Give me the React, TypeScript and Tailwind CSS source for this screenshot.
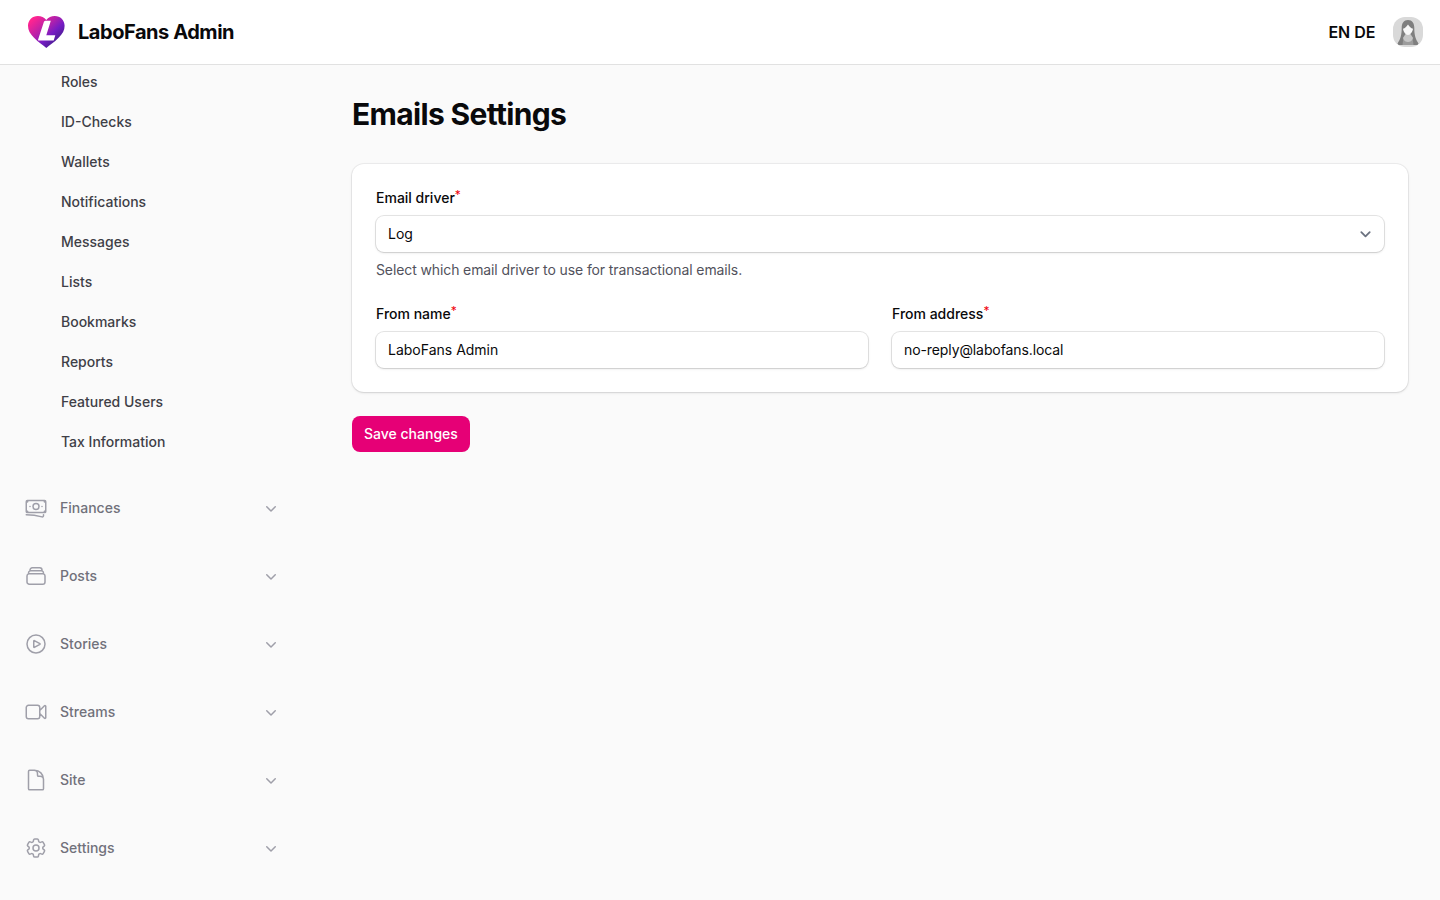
import { useState } from 'react';
import {
  HiOutlineBanknotes,
  HiOutlineCog6Tooth,
  HiOutlineDocument,
  HiOutlinePlayCircle,
  HiOutlineRectangleStack,
  HiOutlineVideoCamera,
  HiMiniChevronDown,
} from 'react-icons/hi2';
import type { IconType } from 'react-icons';

type NavGroup = {
  label: string;
  icon: IconType;
};

const userItems = [
  'Roles',
  'ID-Checks',
  'Wallets',
  'Notifications',
  'Messages',
  'Lists',
  'Bookmarks',
  'Reports',
  'Featured Users',
  'Tax Information',
];

const navGroups: NavGroup[] = [
  { label: 'Finances', icon: HiOutlineBanknotes },
  { label: 'Posts', icon: HiOutlineRectangleStack },
  { label: 'Stories', icon: HiOutlinePlayCircle },
  { label: 'Streams', icon: HiOutlineVideoCamera },
  { label: 'Site', icon: HiOutlineDocument },
  { label: 'Settings', icon: HiOutlineCog6Tooth },
];

function Logo() {
  return (
    <svg viewBox="0 0 37 32" className="h-8 w-[37px]" aria-hidden="true">
      <defs>
        <linearGradient id="heart" x1="5" y1="3" x2="27" y2="27" gradientUnits="userSpaceOnUse">
          <stop offset="0" stopColor="#ff2490" />
          <stop offset="0.45" stopColor="#b321ab" />
          <stop offset="0.72" stopColor="#761cc4" />
          <stop offset="1" stopColor="#4c1d95" />
        </linearGradient>
      </defs>
      <path
        d="M18.300 32C15 29 10.500 26.500 6 21.800C2 17.800 0 14.500 0 9.800C0 4.200 4.300 0 9.800 0C13.300 0 16.300 1.300 18.300 4C20.300 1.300 23.300 0 26.800 0C32.300 0 36.600 4.200 36.600 9.800C36.600 14.500 34.600 17.800 30.600 21.800C26.100 26.500 21.600 29 18.300 32Z"
        fill="url(#heart)"
      />
      <path
        d="M17.500 4.800H22.800L18.300 19.300H27.300L25.700 24.600H11C10.100 24.600 9.900 24 10.200 23.200L15.700 6.600C16 5.500 16.500 4.800 17.500 4.800Z"
        fill="#fff"
      />
    </svg>
  );
}

function Avatar() {
  return (
    <svg viewBox="0 0 30 30" className="size-[30px] rounded-[12px]" aria-hidden="true">
      <rect width="30" height="30" fill="#d9d9d9" />
      <path
        d="M15 3C10.800 3 8.700 6 8.700 11C8.700 18 7.500 22 4.500 26.500L5.500 28H24.500L25.500 26.500C22.500 22 21.300 18 21.300 11C21.300 6 19.200 3 15 3Z"
        fill="#7f7f7f"
      />
      <path d="M10.500 20H19.500L20.500 28H9.500Z" fill="#9c9c9c" />
      <path d="M12.500 17H17.500L20 21C19 24 17 25 15 25C13 25 11 24 10 21Z" fill="#c6c6c6" />
      <path
        d="M15 7.500C13.500 10 12 11 10 11.800C10.500 15 12.500 18 15 18C17.500 18 19.500 15 20 11.800C18 11 16.500 10 15 7.500Z"
        fill="#f7f7f7"
      />
    </svg>
  );
}

function FieldLabel({ htmlFor, children }: { htmlFor: string; children: string }) {
  return (
    <label htmlFor={htmlFor} className="block text-sm font-medium text-zinc-950">
      {children}
      <sup className="-top-[0.33em] text-xs leading-0 font-normal text-[#f0000b]">*</sup>
    </label>
  );
}

const fieldClass =
  'h-9 w-full appearance-none rounded-lg bg-white px-3 text-sm text-zinc-950 shadow-sm ring-1 ring-zinc-950/10 outline-none focus:ring-2 focus:ring-pink-600';

export default function App() {
  const [driver, setDriver] = useState('log');
  const [fromName, setFromName] = useState('LaboFans Admin');
  const [fromAddress, setFromAddress] = useState('no-reply@labofans.local');

  return (
    <div className="flex h-screen flex-col overflow-hidden bg-zinc-50 font-['Inter',sans-serif] text-zinc-950">
      <header className="z-10 flex h-16 shrink-0 items-center bg-white pr-[17px] pl-7 ring-1 ring-zinc-950/10">
        <Logo />
        <span className="ml-[13px] text-xl leading-5 font-bold tracking-[-0.45px]">LaboFans Admin</span>
        <div className="ml-auto flex items-center">
          <div className="mr-[17.5px] flex gap-1 font-semibold">
            <button>EN</button>
            <button>DE</button>
          </div>
          <button aria-label="User menu">
            <Avatar />
          </button>
        </div>
      </header>

      <div className="flex min-h-0 flex-1">
        <aside className="w-80 shrink-0 overflow-hidden">
          <nav className="flex flex-col gap-7 px-6">
            <ul className="flex flex-col gap-1 pl-[37px]">
              {userItems.map((item) => (
                <li key={item} className="flex h-9 items-center text-sm font-medium text-zinc-700">
                  {item}
                </li>
              ))}
            </ul>
            {navGroups.map(({ label, icon: Icon }) => (
              <button key={label} className="flex h-10 w-64 items-center gap-3 text-left">
                <Icon className="size-6 text-zinc-400" />
                <span className="flex-1 text-sm font-medium text-zinc-500">{label}</span>
                <HiMiniChevronDown className="mr-[-1px] size-5 text-zinc-400" />
              </button>
            ))}
          </nav>
        </aside>

        <main className="flex-1 px-8 py-8">
          <h1 className="text-3xl font-bold tracking-[-0.67px]">Emails Settings</h1>

          <section className="mt-8 grid grid-cols-2 gap-6 rounded-xl bg-white p-6 shadow-sm ring-1 ring-zinc-950/5">
            <div className="col-span-2">
              <FieldLabel htmlFor="driver">Email driver</FieldLabel>
              <div className="relative mt-2">
                <select
                  id="driver"
                  value={driver}
                  onChange={(e) => setDriver(e.target.value)}
                  className={`block ${fieldClass}`}
                >
                  <option value="log">Log</option>
                  <option value="smtp">SMTP</option>
                </select>
                <svg
                  viewBox="0 0 20 20"
                  fill="none"
                  stroke="#6b7280"
                  strokeWidth="1.8"
                  strokeLinecap="round"
                  strokeLinejoin="round"
                  className="pointer-events-none absolute top-2 right-2 size-5"
                >
                  <path d="M5.300 8.200l4.200 4.200 4.200-4.200" />
                </svg>
              </div>
              <p className="mt-2 text-sm tracking-[-0.11px] text-zinc-600">
                Select which email driver to use for transactional emails.
              </p>
            </div>
            <div>
              <FieldLabel htmlFor="from-name">From name</FieldLabel>
              <input
                id="from-name"
                type="text"
                value={fromName}
                onChange={(e) => setFromName(e.target.value)}
                className={`mt-2 block pb-0.5 ${fieldClass}`}
              />
            </div>
            <div>
              <FieldLabel htmlFor="from-address">From address</FieldLabel>
              <input
                id="from-address"
                type="text"
                value={fromAddress}
                onChange={(e) => setFromAddress(e.target.value)}
                className={`mt-2 block pb-0.5 tracking-[-0.1px] ${fieldClass}`}
              />
            </div>
          </section>

          <button className="mt-6 h-9 rounded-lg bg-[#e60076] px-3 text-sm font-medium text-white hover:bg-pink-500">
            Save changes
          </button>
        </main>
      </div>
    </div>
  );
}
